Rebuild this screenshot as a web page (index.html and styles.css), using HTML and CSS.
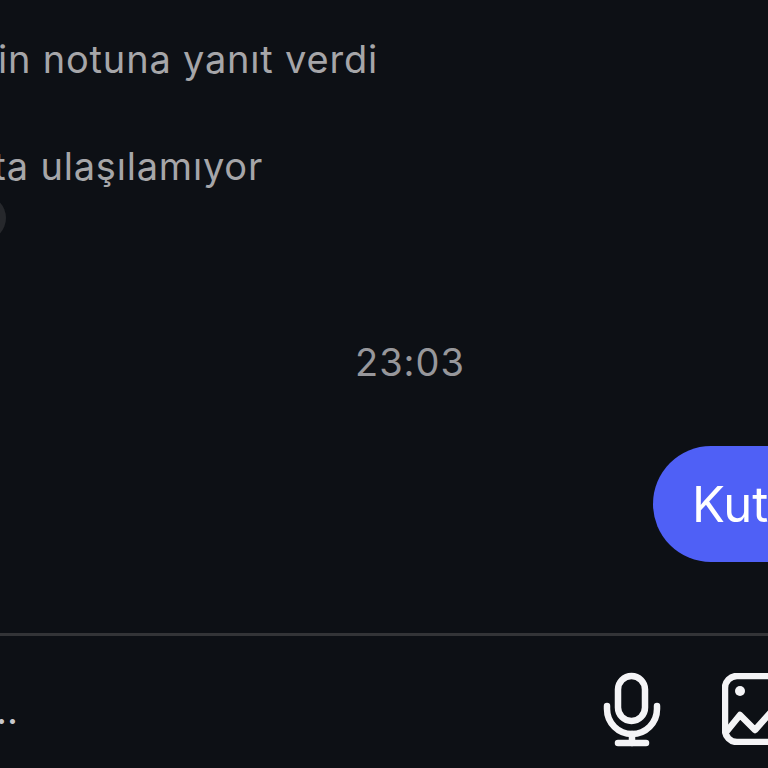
FILE: index.html
```html
<!DOCTYPE html>
<html lang="tr">
<head>
    <meta charset="UTF-8">
    <meta name="viewport" content="width=device-width, initial-scale=1.0">
    <title>Mesajlar</title>
    <link rel="stylesheet" href="styles.css">
</head>
<body>
    <div class="chat">
        <div class="messages">
            <div class="note note-first"><span>in notuna yanıt verdi</span></div>
            <div class="note note-second"><span>ta ulaşılamıyor</span></div>
            <div class="avatar"></div>
            <div class="time">23:03</div>
            <div class="bubble">Kutlarım</div>
        </div>

        <div class="composer">
            <div class="placeholder"><span>...</span></div>
            <svg class="icon-mic" viewBox="0 0 60 78" width="60" height="78" fill="none" stroke="#f4f4f6" stroke-width="6.5" stroke-linecap="round" stroke-linejoin="round">
                <rect x="16" y="6" width="27" height="45" rx="13.5"/>
                <path d="M5 36v3a25 25 0 0 0 50 0v-3"/>
                <path d="M30 64v9"/>
                <path d="M16 73h28"/>
            </svg>
            <svg class="icon-image" viewBox="0 0 72 72" width="72" height="72" fill="none" stroke="#f4f4f6" stroke-width="6.5" stroke-linecap="round" stroke-linejoin="round">
                <rect x="3" y="3" width="66" height="66" rx="12"/>
                <circle cx="18" cy="18" r="5" fill="#f4f4f6" stroke="none"/>
                <path d="M5 58l13-16 15 15 17-19 19 17"/>
            </svg>
        </div>
    </div>
</body>
</html>
```
FILE: styles.css
```css
body {
    margin: 0;
    padding: 0;
    background-color: #0d1015;
    font-family: Inter, "Noto Sans", sans-serif;
}
.chat {
    width: 768px;
    height: 768px;
    overflow: hidden;
    display: flex;
    flex-direction: column;
}
.messages {
    flex: 1;
    display: flex;
    flex-direction: column;
    padding-top: 36px;
}
.note {
    display: flex;
    justify-content: flex-end;
    overflow: hidden;
    white-space: nowrap;
    font-size: 38px;
    line-height: 46px;
    letter-spacing: 0.8px;
    color: #a6a6a9;
}
.note-first {
    width: 378px;
}
.note-second {
    width: 263px;
    margin-top: 61px;
}
.avatar {
    width: 46px;
    height: 46px;
    margin: 6px 0 0 -40px;
    border-radius: 50%;
    background-color: #26282c;
}
.time {
    width: 820px;
    margin-top: 98px;
    text-align: center;
    font-size: 38px;
    line-height: 46px;
    letter-spacing: 1px;
    color: #97979b;
}
.bubble {
    align-self: flex-start;
    margin: 61px 0 0 653px;
    padding: 0 39px;
    height: 116px;
    border-radius: 58px 0 0 58px;
    background-color: #4f60f6;
    color: #fff;
    font-size: 49px;
    line-height: 118px;
    white-space: nowrap;
}
.composer {
    height: 135px;
    box-sizing: border-box;
    padding-top: 14px;
    border-top: 3px solid #333437;
    display: flex;
    align-items: center;
}
.placeholder {
    flex-shrink: 0;
    width: 18px;
    margin-top: 2px;
    display: flex;
    justify-content: flex-end;
    overflow: hidden;
    font-size: 38px;
    line-height: 46px;
    color: #c8c8cb;
}
.icon-mic {
    flex-shrink: 0;
    margin-left: 584px;
}
.icon-image {
    flex-shrink: 0;
    margin-left: 60px;
}
```
